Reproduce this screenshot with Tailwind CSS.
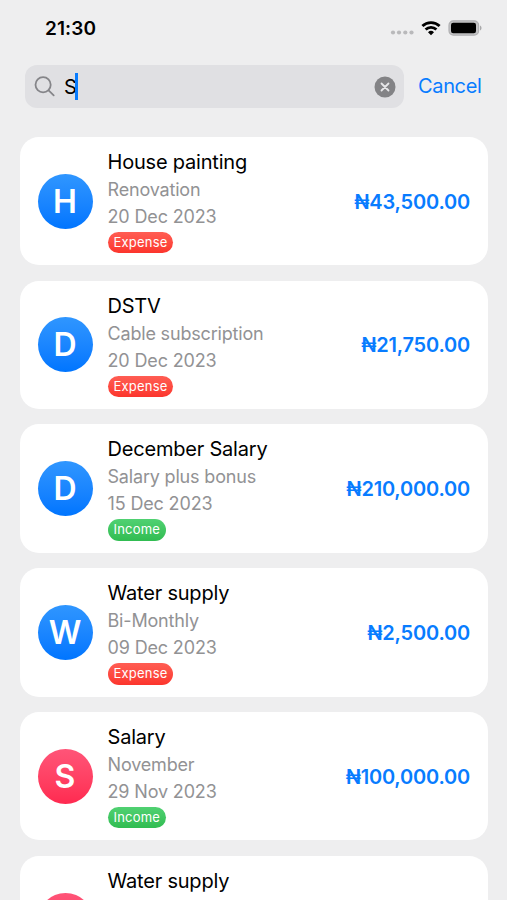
<!DOCTYPE html>
<html lang="en">
<head>
<meta charset="utf-8">
<title>Transactions search</title>
<script src="https://cdn.jsdelivr.net/npm/@tailwindcss/browser@4"></script>
</head>
<body class="h-[900px] w-[507px] overflow-hidden bg-[#eeeeef] font-['Inter',sans-serif] text-black">
<header class="flex h-[57px] items-center justify-between pr-[25px] pl-[45px]">
  <span class="pt-[2px] text-[19px] font-semibold tracking-[0.1px]">21:30</span>
  <div class="flex items-center">
    <svg class="mt-[9px] mr-[7px]" width="24" height="6" fill="#b9b9bb"><circle cx="3" cy="2.5" r="2.1"/><circle cx="9" cy="2.5" r="2.1"/><circle cx="15.3" cy="2.5" r="2.1"/><circle cx="21.5" cy="2.5" r="2.1"/></svg>
    <svg class="-mt-[2px] mr-[7px]" width="20" height="16" viewBox="0 0 20 16" fill="none" stroke="#000" stroke-width="2.8"><path d="M1.4 6.1a12.3 12.3 0 0 1 17.2 0"/><path d="M4.6 9.6a7.7 7.7 0 0 1 10.8 0"/><path d="M10 15.3L7 12.3a4.3 4.3 0 0 1 6 0Z" fill="#000" stroke="none"/></svg>
    <svg class="-mt-[1px]" width="34" height="16" viewBox="0 0 34 16"><rect x="1" y=".8" width="29.6" height="14.4" rx="4.4" fill="#c4c4c6" stroke="#b0b0b2" stroke-width="1.2"/><rect x="3" y="2.8" width="25" height="10.4" rx="2.2" fill="#000"/><path d="M32 5.5c2 .8 2 4.2 0 5Z" fill="#a9a9ab"/></svg>
  </div>
</header>
<div class="flex items-center pt-[8px] pl-[25px]">
  <div class="flex h-[43px] w-[379px] items-center rounded-[12px] bg-[#e0e0e3] pr-[8px] pl-[9px]">
    <svg width="22" height="22" viewBox="0 0 22 22" fill="none" stroke="#858589" stroke-width="1.8" stroke-linecap="round"><circle cx="9.1" cy="8.8" r="7.6"/><path d="M14.6 14.3l5.1 5"/></svg>
    <span class="ml-[8px] text-[20px]">S</span>
    <span class="-ml-[1.5px] h-[27px] w-[2.5px] bg-[#087cff]"></span>
    <svg class="ml-auto" width="22" height="22" viewBox="0 0 22 22"><circle cx="11" cy="11" r="10.5" fill="#838386"/><path d="M7.5 7.5l7 7M14.5 7.5l-7 7" stroke="#e6e6e8" stroke-width="1.8" stroke-linecap="round"/></svg>
  </div>
  <span class="mb-[2px] ml-[14px] text-[20px] tracking-[-0.35px] text-[#087cff]">Cancel</span>
</div>
<main id="list" class="flex flex-col gap-[15.25px] pt-[28.9px] pr-[19px] pl-[19.5px]"></main>
<script>
const rows = [
  ['H', 'House painting', 'Renovation', '20 Dec 2023', 'Expense', '43,500.00'],
  ['D', 'DSTV', 'Cable subscription', '20 Dec 2023', 'Expense', '21,750.00'],
  ['D', 'December Salary', 'Salary plus bonus', '15 Dec 2023', 'Income', '210,000.00'],
  ['W', 'Water supply', 'Bi-Monthly', '09 Dec 2023', 'Expense', '2,500.00'],
  ['S', 'Salary', 'November', '29 Nov 2023', 'Income', '100,000.00']
];
const blue = 'from-[#2f96ff] to-[#0075ff]', pink = 'from-[#ff5478] to-[#ff2950]';
const red = 'from-[#ff5d53] to-[#fc342c]', green = 'from-[#50d172] to-[#30bc51]';
document.getElementById('list').innerHTML = rows.map(([letter, title, note, date, kind, amount], i) => `
  <article class="flex h-[128.5px] shrink-0 items-center rounded-[19px] bg-white pr-[18px] pl-[18px]">
    <div class="flex size-[55px] items-center justify-center rounded-full bg-linear-to-b ${i > 3 ? pink : blue} pt-[1px] text-[32px] font-semibold text-white">${letter}</div>
    <div class="ml-[15px] flex flex-col items-start self-stretch pt-[11px]">
      <h2 class="h-[28px] text-[20px] leading-[28px] tracking-[-0.2px]">${title}</h2>
      <p class="h-[27px] text-[18px] leading-[27px] tracking-[-0.18px] text-[#929294]">${note}</p>
      <p class="h-[27px] text-[18px] leading-[27px] tracking-[-0.15px] text-[#929294]">${date}</p>
      <span class="mt-[2px] h-[21.5px] rounded-full bg-linear-to-b ${kind === 'Income' ? green : red} px-[6px] text-[13px] leading-[21px] tracking-[0.2px] text-white">${kind}</span>
    </div>
    <div class="ml-auto pt-[1px] text-[20px] font-semibold tracking-[-0.2px] text-[#087cff]">₦${amount}</div>
  </article>`).join('') + `
  <article class="flex h-[46px] shrink-0 items-start overflow-hidden rounded-t-[19px] bg-white pl-[18px]">
    <div class="mt-[37px] size-[55px] shrink-0 rounded-full bg-linear-to-b from-[#ff5478] to-[#ff2950]"></div>
    <h2 class="mt-[11px] ml-[15px] h-[28px] text-[20px] leading-[28px] tracking-[-0.2px]">Water supply</h2>
  </article>`;
</script>
</body>
</html>
